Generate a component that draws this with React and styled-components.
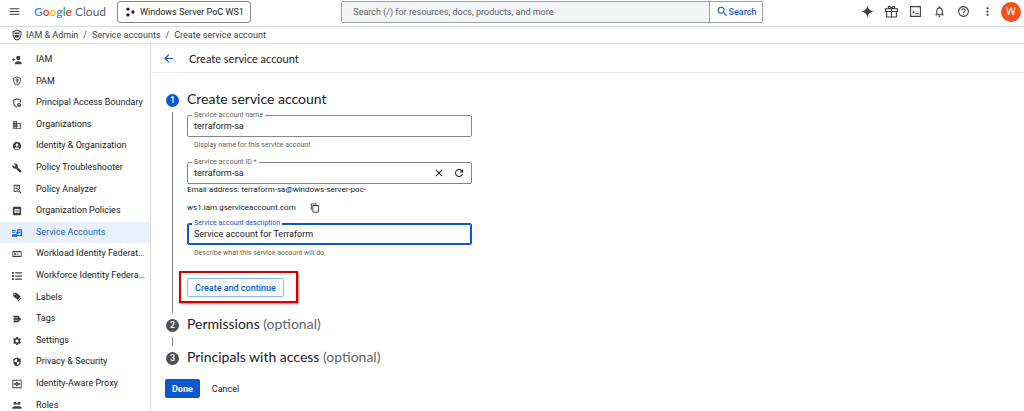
import React, { useState } from "react";
import styled, { createGlobalStyle } from "styled-components";
import { FaList } from "react-icons/fa";
import {
  MdMenu,
  MdSearch,
  MdArrowBack,
  MdClose,
  MdRefresh,
  MdContentCopy,
  MdNotificationsNone,
  MdHelpOutline,
  MdMoreVert,
  MdDomain,
  MdAccountCircle,
  MdBuild,
  MdSettings,
} from "react-icons/md";

function ShieldUser() {
  return (
    <Icon>
      <path d="M12 1 3 5v6c0 5.6 3.8 10.7 9 12 5.2-1.3 9-6.4 9-12V5zm0 2.2 7 3.1V11c0 4.5-2.9 8.6-7 9.900C7.900 19.600 5 15.500 5 11V6.300z" />
      <path d="M7 7h10v3H7zm0 5h10v2l-2 3H9l-2-3z" />
    </Icon>
  );
}

function Iam() {
  return (
    <Icon>
      <path d="M3 7h2v3h3v2H5v3H3v-3H0v-2h3z" />
      <circle cx="15" cy="7" r="5" />
      <path d="M7 20c0-7 16-7 16 0v2H7z" />
    </Icon>
  );
}

function Pam() {
  return (
    <Icon>
      <path d="M12 1 3 5v6c0 5.6 3.8 10.7 9 12 5.2-1.3 9-6.4 9-12V5zm0 2.2 7 3.1V11c0 4.5-2.9 8.6-7 9.9C7.9 19.6 5 15.5 5 11V6.3z" />
      <path d="M12 6a3.5 3.5 0 0 0-1 6.800V18h3v-2h-1v-1h1v-2.500A3.500 3.500 0 0 0 12 6zm0 2a1.300 1.300 0 1 1 0 2.600A1.300 1.300 0 0 1 12 8z" />
    </Icon>
  );
}

function Boundary() {
  return (
    <Icon>
      <path
        d="M12 22C7 20.500 4 16.500 4 11V5l8-3 8 3v6"
        fill="none"
        stroke="currentColor"
        strokeWidth="2.500"
      />
      <circle cx="17" cy="17" r="5" />
      <path
        d="M17 14a1.300 1.300 0 1 1 0 2.600 1.300 1.300 0 0 1 0-2.600zm-2.500 5q2.500-2 5 0l-2.500 1.300z"
        fill="#fff"
      />
    </Icon>
  );
}

function Analyzer() {
  return (
    <Icon>
      <path d="M4 2h15v11h-2V4H6v13h5v2H4z" />
      <path d="M8 6h7v2H8zm0 4h7v2H8z" />
      <path d="m17 17 5 5" stroke="currentColor" strokeWidth="2.500" />
      <circle cx="15" cy="16" r="3" fill="none" stroke="currentColor" strokeWidth="2" />
    </Icon>
  );
}

function OrgPolicies() {
  return (
    <Icon>
      <path
        d="M4 2h16a2 2 0 0 1 2 2v16a2 2 0 0 1-2 2H4a2 2 0 0 1-2-2V4a2 2 0 0 1 2-2zm2 5v10h12V7zm2 2h8v2H8zm0 4h8v2H8z"
        fillRule="evenodd"
      />
    </Icon>
  );
}

function KeyAccounts() {
  return (
    <Icon>
      <path d="M0 5h9v3H0zm0 5h8v2H0zM12 3h12v16H11v-3h10V6h-6v4h-3z" />
      <path d="M0 15h12v6H0zM16 9h4v3h-4z" />
      <circle cx="13" cy="12" r="3" />
    </Icon>
  );
}

function Workload() {
  return (
    <Icon>
      <path d="M1 5h22v14H1zm2 3v8h18V8z" fillRule="evenodd" />
      <path d="M5 10h5v4H5zm7 0 5 2-5 2z" />
    </Icon>
  );
}

function Labels() {
  return (
    <Icon>
      <path
        d="M3 2h8l10 9-7 8L3 10zm3.500 2a1.500 1.500 0 1 0 0 3 1.500 1.500 0 0 0 0-3z"
        fillRule="evenodd"
      />
      <path d="m13 21 9-9v3l-7 8z" />
    </Icon>
  );
}

function Tags() {
  return (
    <Icon>
      <path d="M2 4h13l7 8-7 8H2l5-6H3v-3h4z" />
      <path d="M8 9h6M8 15h6" stroke="#fff" strokeWidth="1.500" />
    </Icon>
  );
}

function Privacy() {
  return (
    <Icon>
      <path
        d="M12 1 3 5v6c0 5.600 3.800 10.700 9 12 5.200-1.300 9-6.400 9-12V5zm0 3v8h6c-.5 3.500-3 6.500-6 7.700V12H6V7z"
        fillRule="evenodd"
      />
    </Icon>
  );
}

function Proxy() {
  return (
    <Icon>
      <path d="M1 2h22v20H1zm2 2v16h18V4z" fillRule="evenodd" />
      <path d="m12 6 4 4h4v4h-4l-4 4-4-4H4v-4h4z" />
      <circle cx="12" cy="12" r="1.500" fill="#fff" />
    </Icon>
  );
}

function Roles() {
  return (
    <Icon>
      <path d="M4 5h6v6H4zm10 0h6v6h-6zM9 8h6v3H9z" />
      <path d="M1 18c0-4 22-4 22 0v3H1z" />
    </Icon>
  );
}

function Gift() {
  return (
    <Icon>
      <path
        d="M1 7h22v5H1zm2 5h18v10H3zm9-5v15M12 7C9 7 6 6 6 4s4-3 6 3c2-6 6-5 6-3s-3 3-6 3"
        fill="none"
        stroke="currentColor"
        strokeWidth="2"
      />
    </Icon>
  );
}

const navItems = [
  { label: "IAM", icon: <Iam /> },
  { label: "PAM", icon: <Pam /> },
  { label: "Principal Access Boundary", icon: <Boundary /> },
  { label: "Organizations", icon: <MdDomain /> },
  { label: "Identity & Organization", icon: <MdAccountCircle /> },
  { label: "Policy Troubleshooter", icon: <MdBuild /> },
  { label: "Policy Analyzer", icon: <Analyzer /> },
  { label: "Organization Policies", icon: <OrgPolicies /> },
  { label: "Service Accounts", icon: <KeyAccounts />, active: true },
  { label: "Workload Identity Federat…", icon: <Workload /> },
  { label: "Workforce Identity Federa…", icon: <FaList /> },
  { label: "Labels", icon: <Labels /> },
  { label: "Tags", icon: <Tags /> },
  { label: "Settings", icon: <MdSettings /> },
  { label: "Privacy & Security", icon: <Privacy /> },
  { label: "Identity-Aware Proxy", icon: <Proxy /> },
  { label: "Roles", icon: <Roles /> },
];

function Header() {
  return (
    <TopBar>
      <Brand>
        <IconButton aria-label="Main menu">
          <MdMenu />
        </IconButton>
        <Logo href="#">
          <Letter $color="#4285f4">G</Letter>
          <Letter $color="#ea4335">o</Letter>
          <Letter $color="#fbbc04">o</Letter>
          <Letter $color="#4285f4">g</Letter>
          <Letter $color="#34a853">l</Letter>
          <Letter $color="#ea4335">e</Letter> Cloud
        </Logo>
        <ProjectButton>
          <svg viewBox="0 0 24 24" width="10" height="10" fill="currentColor">
            <circle cx="7" cy="5" r="4" />
            <circle cx="19" cy="12" r="4" />
            <circle cx="7" cy="19" r="4" />
          </svg>
          Windows Server PoC WS1
        </ProjectButton>
      </Brand>
      <SearchForm role="search" onSubmit={(e) => e.preventDefault()}>
        <SearchInput
          aria-label="Search"
          placeholder="Search (/) for resources, docs, products, and more"
        />
        <SearchButton>
          <MdSearch />
          Search
        </SearchButton>
      </SearchForm>
      <Actions>
        <IconButton aria-label="Gemini">
          <Icon>
            <path d="M12 0c1 7.500 4.500 11 12 12-7.500 1-11 4.500-12 12-1-7.500-4.500-11-12-12 7.500-1 11-4.500 12-12z" />
          </Icon>
        </IconButton>
        <IconButton aria-label="Free trial">
          <Gift />
        </IconButton>
        <IconButton aria-label="Cloud Shell">
          <Icon>
            <path d="M2 2h20v20H2zm2 2v16h16V4z" fillRule="evenodd" />
            <path d="m7 10 4 3-4 3zM12 15h6v2h-6z" />
          </Icon>
        </IconButton>
        <IconButton aria-label="Notifications">
          <MdNotificationsNone />
        </IconButton>
        <IconButton aria-label="Help">
          <MdHelpOutline />
        </IconButton>
        <IconButton aria-label="More">
          <MdMoreVert />
        </IconButton>
        <Avatar aria-label="Account">W</Avatar>
      </Actions>
    </TopBar>
  );
}

function App() {
  const [name, setName] = useState("terraform-sa");
  const [id, setId] = useState("terraform-sa");
  const [description, setDescription] = useState("Service account for Terraform");

  return (
    <>
      <GlobalStyle />
      <Header />
      <Breadcrumbs aria-label="Breadcrumb">
        <ShieldUser />
        <a href="#">IAM &amp; Admin</a>
        <span>/</span>
        <a href="#">Service accounts</a>
        <span>/</span>
        <a href="#">Create service account</a>
      </Breadcrumbs>
      <Body>
        <Sidebar>
          {navItems.map((item) => (
            <NavLink href="#" key={item.label} $active={item.active}>
              {item.icon}
              {item.label}
            </NavLink>
          ))}
        </Sidebar>
        <Main>
          <PageHeader>
            <BackButton aria-label="Back">
              <MdArrowBack />
            </BackButton>
            <PageTitle>Create service account</PageTitle>
          </PageHeader>
          <Stepper>
            <Step>
              <Marker>
                <Badge $active>1</Badge>
                <Line />
              </Marker>
              <StepBody>
                <StepTitle>Create service account</StepTitle>
                <Field>
                  <Outline>
                    <Label htmlFor="sa-name">Service account name</Label>
                    <Input id="sa-name" value={name} onChange={(e) => setName(e.target.value)} />
                  </Outline>
                  <Hint>Display name for this service account</Hint>
                </Field>
                <Field>
                  <Outline>
                    <Label htmlFor="sa-id">Service account ID *</Label>
                    <Input id="sa-id" value={id} onChange={(e) => setId(e.target.value)} />
                    <FieldButton aria-label="Clear" onClick={() => setId("")}>
                      <MdClose />
                    </FieldButton>
                    <FieldButton aria-label="Regenerate" onClick={() => setId(name)}>
                      <MdRefresh />
                    </FieldButton>
                  </Outline>
                  <Email>
                    Email address: terraform-sa@windows-server-poc-
                    <br />
                    ws1.iam.gserviceaccount.com
                    <CopyButton aria-label="Copy email address">
                      <MdContentCopy />
                    </CopyButton>
                  </Email>
                </Field>
                <Field>
                  <Outline $focused>
                    <Label htmlFor="sa-desc" $focused>
                      Service account description
                    </Label>
                    <Input
                      id="sa-desc"
                      value={description}
                      onChange={(e) => setDescription(e.target.value)}
                    />
                  </Outline>
                  <Hint>Describe what this service account will do</Hint>
                </Field>
                <Highlight>
                  <OutlineButton>Create and continue</OutlineButton>
                </Highlight>
              </StepBody>
            </Step>
            <Step>
              <Marker>
                <Badge>2</Badge>
                <Line />
              </Marker>
              <StepBody>
                <StepTitle>
                  Permissions <Optional>(optional)</Optional>
                </StepTitle>
              </StepBody>
            </Step>
            <Step>
              <Marker>
                <Badge>3</Badge>
              </Marker>
              <StepBody>
                <StepTitle>
                  Principals with access <Optional>(optional)</Optional>
                </StepTitle>
              </StepBody>
            </Step>
          </Stepper>
          <Footer>
            <DoneButton>Done</DoneButton>
            <CancelButton>Cancel</CancelButton>
          </Footer>
        </Main>
      </Body>
    </>
  );
}

export default App;

const GlobalStyle = createGlobalStyle`
  * {
    box-sizing: border-box;
  }
  html {
    height: 100%;
    overflow: hidden;
  }
  body {
    margin: 0;
    background: #fff;
    color: #202124;
    font-family: Roboto, sans-serif;
    font-size: 9px;
  }
  button, input {
    font: inherit;
    color: inherit;
    padding: 0;
    border: none;
    background: none;
    outline: none;
  }
  button {
    cursor: pointer;
  }
  a {
    color: inherit;
    text-decoration: none;
  }
  svg {
    flex-shrink: 0;
  }
`;

const Icon = styled.svg.attrs({ viewBox: "0 0 24 24", fill: "currentColor" })`
  width: 1em;
  height: 1em;
`;

const TopBar = styled.header`
  display: flex;
  align-items: center;
  height: 27px;
  padding-bottom: 3px;
  border-bottom: 1px solid #dadce0;
`;
const Brand = styled.div`
  display: flex;
  align-items: center;
  width: 33.33%;
  padding-left: 2px;
`;
const IconButton = styled.button`
  display: flex;
  align-items: center;
  justify-content: center;
  width: 24px;
  height: 22px;
  font-size: 13px;
  color: #3c4043;
`;
const Logo = styled.a`
  width: 70px;
  margin-left: 8px;
  font-family: Lato, sans-serif;
  font-size: 12px;
  color: #5f6368;
  white-space: nowrap;
`;
const Letter = styled.span`
  color: ${(props) => props.$color};
  font-weight: 600;
`;
const ProjectButton = styled.button`
  display: flex;
  align-items: center;
  gap: 5px;
  height: 22px;
  margin-left: 13px;
  padding: 0 6px 0 7px;
  border: 1px solid #80868b;
  border-radius: 3px;
  white-space: nowrap;
`;

const SearchForm = styled.form`
  display: flex;
  flex: 1;
  height: 22px;
  margin-right: 92px;
  border: 1px solid #9aa0a6;
  border-radius: 2px;
`;
const SearchInput = styled.input`
  flex: 1;
  min-width: 0;
  padding: 0 11px;
  background: #f1f3f4;
  &::placeholder {
    color: #5f6368;
    opacity: 1;
  }
`;
const SearchButton = styled.button`
  display: flex;
  align-items: center;
  justify-content: center;
  width: 53px;
  border-left: 1px solid #9aa0a6;
  color: #1a5fc8;
  font-weight: 500;
  svg {
    font-size: 13px;
  }
`;

const Actions = styled.div`
  display: flex;
  align-items: center;
  padding-right: 3px;
`;
const Avatar = styled.button`
  width: 20px;
  height: 20px;
  margin-left: 2px;
  border-radius: 50%;
  background: #f4511e;
  color: #fff;
  font-size: 11px;
`;

const Breadcrumbs = styled.nav`
  display: flex;
  align-items: center;
  gap: 5px;
  height: 17px;
  padding-left: 11px;
  border-bottom: 1px solid #e0e0e0;
  color: #3c4043;
  svg {
    font-size: 12px;
    margin-right: -2px;
  }
`;

const Body = styled.div`
  display: flex;
`;
const Sidebar = styled.nav`
  width: 151px;
  flex-shrink: 0;
  padding-top: 5px;
  border-right: 1px solid #dadce0;
`;
const NavLink = styled.a`
  display: flex;
  align-items: center;
  gap: 14px;
  padding-left: 12px;
  line-height: 2.4;
  white-space: nowrap;
  background: ${(props) => (props.$active ? "#e8f0fe" : "transparent")};
  color: ${(props) => (props.$active ? "#1967d2" : "#202124")};
  svg {
    font-size: 10px;
    color: ${(props) => (props.$active ? "#1967d2" : "#3c4043")};
  }
`;

const Main = styled.main`
  flex: 1;
  min-width: 0;
`;
const PageHeader = styled.div`
  display: flex;
  align-items: center;
  gap: 14px;
  height: 29px;
  padding-left: 11px;
  border-bottom: 1px solid #e8eaed;
`;
const BackButton = styled.button`
  display: flex;
  font-size: 13px;
  color: #0b57d0;
`;
const PageTitle = styled.h1`
  margin: 0;
  font-family: Lato, sans-serif;
  font-size: 11px;
  font-weight: 400;
`;

const Stepper = styled.div`
  padding: 17px 15px 0;
`;
const Step = styled.section`
  display: flex;
  gap: 8px;
`;
const Marker = styled.div`
  display: flex;
  flex-direction: column;
  align-items: center;
  width: 13px;
  padding-top: 4px;
`;
const Badge = styled.span`
  width: 13px;
  height: 13px;
  border-radius: 50%;
  background: ${(props) => (props.$active ? "#0b57d0" : "#4d5156")};
  color: #fff;
  font-size: 9px;
  font-weight: 500;
  line-height: 13px;
  text-align: center;
`;
const Line = styled.span`
  flex: 1;
  width: 1px;
  min-height: 9px;
  margin: 5px 0 2px;
  background: #80868b;
`;
const StepBody = styled.div`
  width: 285px;
`;
const StepTitle = styled.h2`
  margin: 0;
  padding-bottom: 1px;
  font-family: Lato, sans-serif;
  font-size: 14px;
  font-weight: 400;
  line-height: 18px;
`;
const Optional = styled.span`
  color: #5f6368;
`;

const Field = styled.div`
  margin-top: 6px;
`;
const Outline = styled.div`
  position: relative;
  display: flex;
  align-items: center;
  height: 22px;
  padding: 0 2px 0 6px;
  border: 1px solid #80868b;
  border-radius: 2px;
  ${(props) => props.$focused && "border-color: #0b57d0; box-shadow: inset 0 0 0 1px #0b57d0;"}
`;
const Label = styled.label`
  position: absolute;
  top: -6px;
  left: 4px;
  padding: 0 2px;
  background: #fff;
  color: ${(props) => (props.$focused ? "#0b57d0" : "#5f6368")};
  font-size: 7px;
  line-height: 10px;
`;
const Input = styled.input`
  flex: 1;
  min-width: 0;
`;
const FieldButton = styled.button`
  display: flex;
  justify-content: center;
  width: 20px;
  font-size: 12px;
`;
const Hint = styled.p`
  margin: 0;
  padding: 3px 7px 6px;
  color: #5f6368;
  font-size: 7px;
  line-height: 10px;
`;
const Email = styled.p`
  margin: -3px 0 0;
  font-size: 8px;
  line-height: 18px;
`;
const CopyButton = styled.button`
  margin-left: 14px;
  font-size: 10px;
  vertical-align: middle;
  svg {
    display: block;
  }
`;

const Highlight = styled.div`
  position: relative;
  width: max-content;
  margin: 14px 0 18px;
  &::after {
    content: "";
    position: absolute;
    inset: -7px -14px -6px -8px;
    border: 2px solid #d50000;
    box-shadow: 1px 1px 2px rgba(0, 0, 0, 0.5);
    pointer-events: none;
  }
`;
const OutlineButton = styled.button`
  height: 19px;
  padding: 0 7px;
  border: 1px solid #8ab4f8;
  border-radius: 2px;
  color: #0b57d0;
  font-weight: 500;
`;

const Footer = styled.div`
  display: flex;
  gap: 12px;
  padding: 12px 14px;
`;
const DoneButton = styled.button`
  height: 19px;
  padding: 0 7px;
  border-radius: 2px;
  background: #0b57d0;
  color: #fff;
  font-weight: 700;
`;
const CancelButton = styled.button`
  height: 19px;
`;
